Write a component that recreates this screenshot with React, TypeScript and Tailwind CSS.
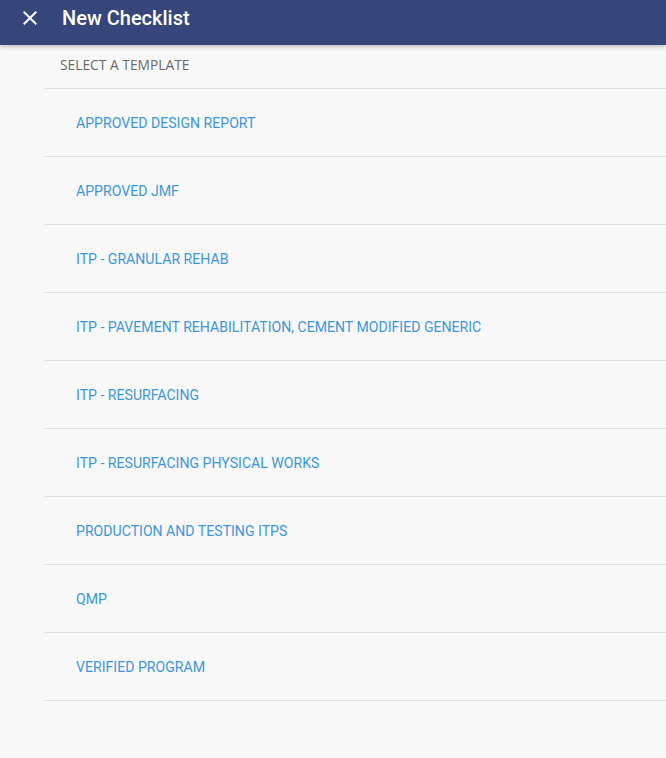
const templates = [
  "APPROVED DESIGN REPORT",
  "APPROVED JMF",
  "ITP - GRANULAR REHAB",
  "ITP - PAVEMENT REHABILITATION, CEMENT MODIFIED GENERIC",
  "ITP - RESURFACING",
  "ITP - RESURFACING PHYSICAL WORKS",
  "PRODUCTION AND TESTING ITPS",
  "QMP",
  "VERIFIED PROGRAM",
]

export default function App() {
  return (
    <div className="min-h-[758px] bg-[#f8f8f8] font-['Roboto',sans-serif]">
      <header className="relative z-10 flex h-[45px] items-start bg-[#37467a] pt-[4px] shadow-[0_2px_4px_rgba(0,0,0,0.22)]">
        <button className="ml-[18px] mt-[2px] flex h-6 w-6 items-center justify-center text-white">
          {/* material close icon */}
          <svg viewBox="0 0 24 24" className="h-6 w-6" fill="currentColor">
            <path d="M19 6.41L17.59 5 12 10.59 6.41 5 5 6.41 10.59 12 5 17.59 6.41 19 12 13.41 17.59 19 19 17.59 13.41 12z" />
          </svg>
        </button>
        <h1 className="ml-[20px] text-[20px] leading-[28px] font-medium text-white">New Checklist</h1>
      </header>
      <div className="ml-[44px]">
        <div className="flex h-[44px] items-center border-b border-[#e0e0e0] pb-[2px] pl-4 font-['Open_Sans',sans-serif] text-[13.8px] text-[#6a6a6a]">
          SELECT A TEMPLATE
        </div>
        <ul>
          {templates.map((t) => (
            <li
              key={t}
              className="flex h-[68px] items-center border-b border-[#e0e0e0] pl-8 pt-[2px] text-[14.1px] text-[#3d96db]"
            >
              {t}
            </li>
          ))}
        </ul>
      </div>
    </div>
  )
}
